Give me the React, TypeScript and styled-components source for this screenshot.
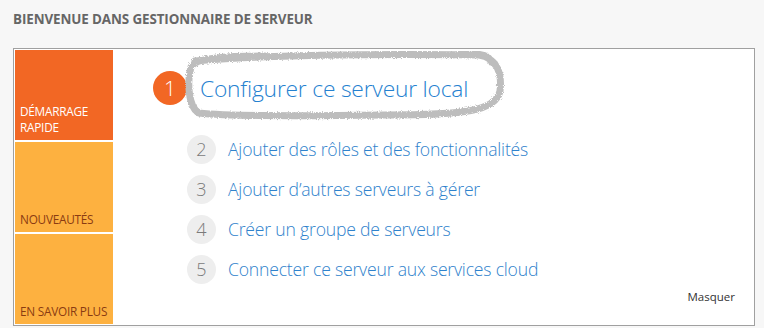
import React from 'react';
import styled, { createGlobalStyle } from 'styled-components';

const GlobalStyle = createGlobalStyle`
  html, body {
    margin: 0;
    padding: 0;
    background: #f7f7f7;
    font-family: "Open Sans", "Noto Sans", sans-serif;
  }
`;

const Page = styled.div`
  width: 764px;
  height: 328px;
  padding: 10px 0 0 13px;
  box-sizing: border-box;
`;

const Title = styled.h1`
  margin: 0 0 20px 0;
  font-size: 13.4px;
  font-weight: 700;
  color: #666666;
  letter-spacing: -0.1px;
  line-height: 18px;
`;

const Panel = styled.div`
  position: relative;
  display: flex;
  width: 742px;
  height: 278px;
  box-sizing: border-box;
  border: 1px solid #a0a0a0;
  background: #ffffff;
  padding: 1px;
`;

const Sidebar = styled.div`
  display: flex;
  flex-direction: column;
  gap: 2px;
  width: 98px;
`;

const Tile = styled.div<{ $active?: boolean }>`
  flex: 1;
  display: flex;
  align-items: flex-end;
  padding: 0 0 5px 5px;
  background: ${(p) => (p.$active ? '#f26724' : '#fdb140')};
  color: ${(p) => (p.$active ? '#ffffff' : '#8a3b12')};
  font-size: 11.8px;
  letter-spacing: -0.25px;
  line-height: 16px;
  white-space: nowrap;
`;

const Content = styled.div`
  position: relative;
  flex: 1;
  padding: 20px 0 0 40px;
`;

const HeroRow = styled.div`
  position: relative;
  display: flex;
  align-items: center;
  gap: 13px;
  height: 36px;
`;

const Steps = styled.div`
  display: flex;
  flex-direction: column;
  gap: 10px;
  margin: 28px 0 0 34px;
`;

const StepRow = styled.div`
  display: flex;
  align-items: center;
  gap: 12px;
  height: 30px;
`;

const Bubble = styled.div<{ $big?: boolean }>`
  flex: none;
  display: flex;
  align-items: center;
  justify-content: center;
  width: ${(p) => (p.$big ? '34px' : '29px')};
  height: ${(p) => (p.$big ? '34px' : '29px')};
  border-radius: 50%;
  background: ${(p) => (p.$big ? '#f26724' : '#eeeeee')};
  color: ${(p) => (p.$big ? '#ffffff' : '#7a7a7a')};
  font-size: ${(p) => (p.$big ? '21px' : '18px')};
  font-weight: 300;
`;

const HeroLink = styled.a`
  position: relative;
  z-index: 1;
  font-size: 22.8px;
  font-weight: 300;
  color: #2581d0;
  text-decoration: none;
  letter-spacing: -0.2px;
`;

const StepLink = styled.a`
  font-size: 17.6px;
  font-weight: 300;
  color: #2f82cc;
  text-decoration: none;
  letter-spacing: -0.2px;
`;

const Scribble = styled.svg`
  position: absolute;
  left: 32px;
  top: -19px;
  pointer-events: none;
`;

const Hide = styled.a`
  position: absolute;
  right: 18px;
  bottom: 20px;
  font-size: 11.5px;
  color: #333333;
  text-decoration: none;
`;

const steps = [
  'Ajouter des rôles et des fonctionnalités',
  'Ajouter d’autres serveurs à gérer',
  'Créer un groupe de serveurs',
  'Connecter ce serveur aux services cloud',
];

const App = () => {
  return (
    <Page>
      <GlobalStyle />
      <Title>BIENVENUE DANS GESTIONNAIRE DE SERVEUR</Title>
      <Panel>
        <Sidebar>
          <Tile $active>DÉMARRAGE<br />RAPIDE</Tile>
          <Tile>NOUVEAUTÉS</Tile>
          <Tile>EN SAVOIR PLUS</Tile>
        </Sidebar>
        <Content>
          <HeroRow>
            <Bubble $big>1</Bubble>
            <HeroLink href="#">Configurer ce serveur local</HeroLink>
            <Scribble width="322" height="74" viewBox="0 0 322 74">
              <defs>
                <filter id="pencil" x="-5%" y="-20%" width="110%" height="140%">
                  <feTurbulence type="fractalNoise" baseFrequency="0.9" numOctaves="2" result="noise" />
                  <feDisplacementMap in="SourceGraphic" in2="noise" scale="4" result="rough" />
                  <feGaussianBlur in="rough" stdDeviation="0.7" />
                </filter>
              </defs>
              <path
                d="M 10 10 C 80 4 200 3 294 4 C 313 7 317 24 315 40 C 311 60 280 64 200 64 C 130 65 40 65 14 62 C 3 56 2 30 6 16 C 10 7 40 5 80 5 M 268 4 C 290 2 304 2 306 11"
                fill="none"
                stroke="#bdbdbd"
                strokeWidth="7"
                strokeLinecap="round"
                filter="url(#pencil)"
              />
            </Scribble>
          </HeroRow>
          <Steps>
            {steps.map((s, i) => (
              <StepRow key={s}>
                <Bubble>{i + 2}</Bubble>
                <StepLink href="#">{s}</StepLink>
              </StepRow>
            ))}
          </Steps>
          <Hide href="#">Masquer</Hide>
        </Content>
      </Panel>
    </Page>
  );
};

export default App;
